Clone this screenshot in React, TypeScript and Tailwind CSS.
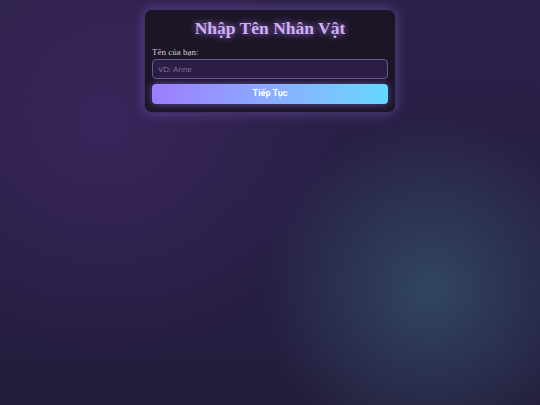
import React, { useState } from 'react';

export default function App() {
  const [name, setName] = useState('');

  return (
    <div className="min-h-[405px] w-full overflow-hidden bg-[#271f42] bg-[radial-gradient(circle_at_105px_125px,rgba(70,42,108,0.55)_0px,rgba(70,42,108,0)_240px),radial-gradient(circle_at_430px_290px,rgba(52,80,104,0.8)_0px,rgba(52,80,104,0)_170px),linear-gradient(180deg,#2c2149_0%,#271f44_55%,#231c3c_100%)]">
      <div className="flex justify-center pt-[9px]">
        {/* Name card */}
        <div className="w-[252px] rounded-[8px] border border-[#3e2f5e] bg-[#1b1526] px-[7px] pt-[4px] pb-[8px] shadow-[0_0_12px_rgba(150,110,230,0.45)]">
          <h1 className="text-center font-['Liberation_Serif',serif] text-[17.5px] font-bold leading-[28px] text-[#d0aef8] [text-shadow:0_0_7px_rgba(190,140,255,0.85)]">
            Nhập Tên Nhân Vật
          </h1>

          <label className="mt-[4px] block font-['Liberation_Serif',serif] text-[9px] leading-[12px] text-[#cfc6dc]">
            Tên của bạn:
          </label>

          <input
            value={name}
            onChange={(e) => setName(e.target.value)}
            placeholder="VD: Anne"
            className="mt-[1px] block h-[20px] w-full rounded-[4px] border border-[#6b5590] bg-[#2c1d45] px-[5px] font-['Liberation_Sans',sans-serif] text-[8px] text-[#e6dcf5] outline-none placeholder:text-[#7d6f95]"
          />

          <button className="mt-[5px] block h-[20px] w-full rounded-[4px] bg-gradient-to-r from-[#9c7cff] to-[#64d8ff] font-['Roboto','Liberation_Sans',sans-serif] text-[9px] font-bold text-white shadow-[0_0_8px_rgba(150,120,255,0.55)]">
            Tiếp Tục
          </button>
        </div>
      </div>
    </div>
  );
}
